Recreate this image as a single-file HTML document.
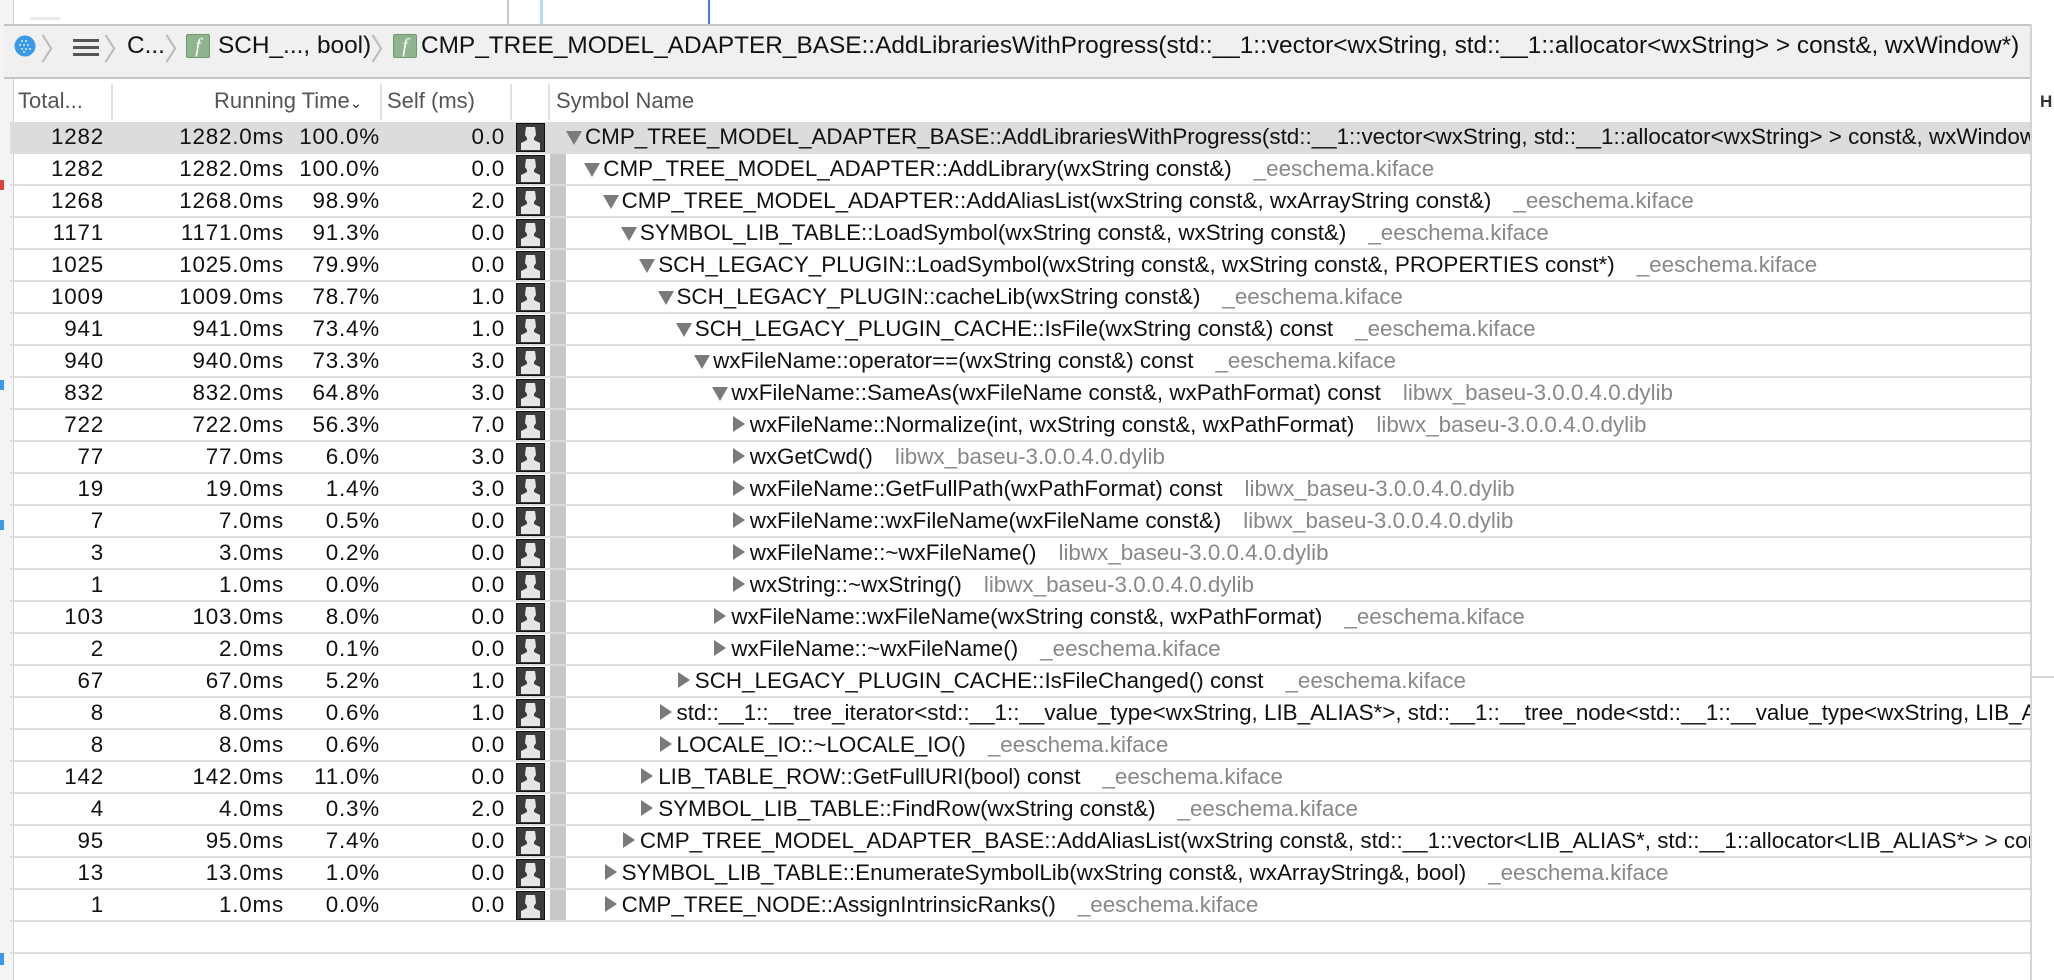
<!DOCTYPE html>
<html><head><meta charset="utf-8"><style>
*{margin:0;padding:0;box-sizing:border-box}
body{width:2054px;height:980px;overflow:hidden;background:#fff;font-family:"Liberation Sans",Arial,sans-serif;position:relative;color:#111}
.a{position:absolute;white-space:nowrap}
.row{position:absolute;left:10px;width:2020px;height:32px;border-bottom:2px solid #dcdcdc;font-size:22.4px;line-height:30px;white-space:nowrap}
.row .n{position:absolute;text-align:right;letter-spacing:0.8px}
.ic{position:absolute;left:506px;top:1px;width:29px;height:29px}
.bar{position:absolute;left:540px;top:0;width:16px;height:32px;background:#c8c8c8}
.sym{position:absolute;top:0;white-space:nowrap}
.td{display:inline-block;width:0;height:0;border-left:8px solid transparent;border-right:8px solid transparent;border-top:14px solid #7a7a7a;margin-right:3px;vertical-align:-1px}
.tr{display:inline-block;width:0;height:0;border-top:8px solid transparent;border-bottom:8px solid transparent;border-left:12px solid #7a7a7a;margin:0 5px 0 2px;vertical-align:0px}
.lib{color:#888;margin-left:22px}
.hd{position:absolute;top:81px;height:41px;font-size:22px;line-height:40px;color:#555}
.vl{position:absolute;top:84px;height:36px;width:2px;background:#e2e2e2}
.chev{position:absolute;top:36px;color:#bbb;font-size:30px;line-height:30px;font-weight:100}
.fb{position:absolute;top:34px;width:24px;height:24px;background:#8fb58f;border:1px solid #6f9a6f;border-radius:2px;color:#fff;font-family:"Liberation Serif",serif;font-style:italic;font-size:20px;line-height:22px;text-align:center}
</style></head><body>
<div class="a" style="left:0;top:0;width:14px;height:980px;background:#f4f4f4;border-right:1px solid #d0d0d0"></div>
<div class="a" style="left:507px;top:0;width:2px;height:24px;background:#c8c8c8"></div>
<div class="a" style="left:540px;top:0;width:3px;height:24px;background:#b8dcf8"></div>
<div class="a" style="left:708px;top:0;width:2px;height:24px;background:#4a7de0"></div>
<div class="a" style="left:30px;top:17px;width:30px;height:3px;background:#eaeaea"></div>
<div class="a" style="left:4px;top:24px;width:2026px;height:55px;background:#f0f0f0;border-top:2px solid #c4c4c4;border-bottom:2px solid #c4c4c4"></div>
<div class="a" style="left:2030px;top:24px;width:2px;height:956px;background:#d4d4d4"></div>
<svg class="a" style="left:14px;top:35px" width="22" height="22" viewBox="0 0 22 22"><circle cx="11" cy="11" r="10.5" fill="#3a9ae8"/><g fill="#d6ecff"><circle cx="8" cy="6" r="1"/><circle cx="12" cy="6" r="1"/><circle cx="6" cy="10" r="1"/><circle cx="10" cy="10" r="1"/><circle cx="14" cy="10" r="1"/><circle cx="8" cy="14" r="1"/><circle cx="12" cy="14" r="1"/><circle cx="16" cy="14" r="1"/><circle cx="10" cy="17" r="1"/></g></svg>
<div class="chev" style="left:40px">〉</div>
<div class="a" style="left:73px;top:39px;width:26px;height:3px;background:#555;box-shadow:0 7px 0 #555,0 14px 0 #555"></div>
<div class="chev" style="left:103px">〉</div>
<div class="a" style="left:127px;top:32px;font-size:24.4px;line-height:28px">C...</div>
<div class="chev" style="left:164px">〉</div>
<div class="fb" style="left:186px">f</div>
<div class="a" style="left:218px;top:32px;font-size:24.4px;line-height:28px">SCH_..., bool)</div>
<div class="chev" style="left:370px">〉</div>
<div class="fb" style="left:393px">f</div>
<div class="a" style="left:421px;top:32px;font-size:24.4px;line-height:28px">CMP_TREE_MODEL_ADAPTER_BASE::AddLibrariesWithProgress(std::__1::vector&lt;wxString, std::__1::allocator&lt;wxString&gt; &gt; const&amp;, wxWindow*)</div>
<div class="hd" style="left:18px">Total...</div>
<div class="hd" style="left:214px">Running Time<span style="font-size:15px;color:#333">&#8964;</span></div>
<div class="hd" style="left:387px">Self (ms)</div>
<div class="hd" style="left:556px">Symbol Name</div>
<div class="vl" style="left:111px"></div><div class="vl" style="left:380px"></div><div class="vl" style="left:510px"></div><div class="vl" style="left:548px"></div>
<div class="a" style="left:2040px;top:92px;font-size:17px;font-weight:bold;color:#333">H</div>
<div class="a" style="left:2032px;top:676px;width:22px;height:2px;background:#d4d4d4"></div>
<div class="a" style="left:0;top:180px;width:4px;height:10px;background:#e04040"></div>
<div class="a" style="left:0;top:380px;width:4px;height:10px;background:#3a9ae8"></div>
<div class="a" style="left:0;top:520px;width:4px;height:10px;background:#3a9ae8"></div>
<div class="a" style="left:0;top:953px;width:4px;height:12px;background:#3a9ae8"></div>
<div id="rows"></div>
<div class="a" style="left:10px;top:952px;width:2020px;height:2px;background:#dcdcdc"></div>
<script>
var d=[
[1282,"1282.0ms","100.0%","0.0",0,1,"CMP_TREE_MODEL_ADAPTER_BASE::AddLibrariesWithProgress(std::__1::vector<wxString, std::__1::allocator<wxString> > const&, wxWindow*)",""],
[1282,"1282.0ms","100.0%","0.0",1,1,"CMP_TREE_MODEL_ADAPTER::AddLibrary(wxString const&)","_eeschema.kiface"],
[1268,"1268.0ms","98.9%","2.0",2,1,"CMP_TREE_MODEL_ADAPTER::AddAliasList(wxString const&, wxArrayString const&)","_eeschema.kiface"],
[1171,"1171.0ms","91.3%","0.0",3,1,"SYMBOL_LIB_TABLE::LoadSymbol(wxString const&, wxString const&)","_eeschema.kiface"],
[1025,"1025.0ms","79.9%","0.0",4,1,"SCH_LEGACY_PLUGIN::LoadSymbol(wxString const&, wxString const&, PROPERTIES const*)","_eeschema.kiface"],
[1009,"1009.0ms","78.7%","1.0",5,1,"SCH_LEGACY_PLUGIN::cacheLib(wxString const&)","_eeschema.kiface"],
[941,"941.0ms","73.4%","1.0",6,1,"SCH_LEGACY_PLUGIN_CACHE::IsFile(wxString const&) const","_eeschema.kiface"],
[940,"940.0ms","73.3%","3.0",7,1,"wxFileName::operator==(wxString const&) const","_eeschema.kiface"],
[832,"832.0ms","64.8%","3.0",8,1,"wxFileName::SameAs(wxFileName const&, wxPathFormat) const","libwx_baseu-3.0.0.4.0.dylib"],
[722,"722.0ms","56.3%","7.0",9,0,"wxFileName::Normalize(int, wxString const&, wxPathFormat)","libwx_baseu-3.0.0.4.0.dylib"],
[77,"77.0ms","6.0%","3.0",9,0,"wxGetCwd()","libwx_baseu-3.0.0.4.0.dylib"],
[19,"19.0ms","1.4%","3.0",9,0,"wxFileName::GetFullPath(wxPathFormat) const","libwx_baseu-3.0.0.4.0.dylib"],
[7,"7.0ms","0.5%","0.0",9,0,"wxFileName::wxFileName(wxFileName const&)","libwx_baseu-3.0.0.4.0.dylib"],
[3,"3.0ms","0.2%","0.0",9,0,"wxFileName::~wxFileName()","libwx_baseu-3.0.0.4.0.dylib"],
[1,"1.0ms","0.0%","0.0",9,0,"wxString::~wxString()","libwx_baseu-3.0.0.4.0.dylib"],
[103,"103.0ms","8.0%","0.0",8,0,"wxFileName::wxFileName(wxString const&, wxPathFormat)","_eeschema.kiface"],
[2,"2.0ms","0.1%","0.0",8,0,"wxFileName::~wxFileName()","_eeschema.kiface"],
[67,"67.0ms","5.2%","1.0",6,0,"SCH_LEGACY_PLUGIN_CACHE::IsFileChanged() const","_eeschema.kiface"],
[8,"8.0ms","0.6%","1.0",5,0,"std::__1::__tree_iterator<std::__1::__value_type<wxString, LIB_ALIAS*>, std::__1::__tree_node<std::__1::__value_type<wxString, LIB_ALIAS*>, void*>*, long>","_eeschema.kiface"],
[8,"8.0ms","0.6%","0.0",5,0,"LOCALE_IO::~LOCALE_IO()","_eeschema.kiface"],
[142,"142.0ms","11.0%","0.0",4,0,"LIB_TABLE_ROW::GetFullURI(bool) const","_eeschema.kiface"],
[4,"4.0ms","0.3%","2.0",4,0,"SYMBOL_LIB_TABLE::FindRow(wxString const&)","_eeschema.kiface"],
[95,"95.0ms","7.4%","0.0",3,0,"CMP_TREE_MODEL_ADAPTER_BASE::AddAliasList(wxString const&, std::__1::vector<LIB_ALIAS*, std::__1::allocator<LIB_ALIAS*> > const&)","_eeschema.kiface"],
[13,"13.0ms","1.0%","0.0",2,0,"SYMBOL_LIB_TABLE::EnumerateSymbolLib(wxString const&, wxArrayString&, bool)","_eeschema.kiface"],
[1,"1.0ms","0.0%","0.0",2,0,"CMP_TREE_NODE::AssignIntrinsicRanks()","_eeschema.kiface"]];
function e(s){return s.replace(/&/g,"&amp;").replace(/</g,"&lt;").replace(/>/g,"&gt;")}
var ic='<svg class="ic" viewBox="0 0 29 29"><rect x="0.5" y="0.5" width="28" height="28" fill="#3c3c3c" stroke="#111"/><path d="M10 4h9l1 8-2 3 0 2 6 3v7H5v-7l6-3 0-2-2-3z" fill="#e6e6e6"/></svg>';
var h="";
d.forEach(function(r,i){
 var top=122+32*i;
 h+='<div class="row" style="top:'+top+'px;'+(i==0?'background:#dcdcdc;':'')+'overflow:hidden">'+
 '<div class="n" style="right:1926px">'+r[0]+'</div>'+
 '<div class="n" style="right:1746px">'+r[1]+'</div>'+
 '<div class="n" style="right:1650px">'+r[2]+'</div>'+
 '<div class="n" style="right:1525px">'+r[3]+'</div>'+ic+
 (i>0?'<div class="bar"></div>':'')+
 '<div class="sym" style="left:'+(556+18.3*r[4])+'px"><span class="'+(r[5]?'td':'tr')+'"></span>'+e(r[6])+(r[7]?'<span class="lib">'+r[7]+'</span>':'')+'</div></div>';
});
document.getElementById("rows").innerHTML=h;
</script>
</body></html>
